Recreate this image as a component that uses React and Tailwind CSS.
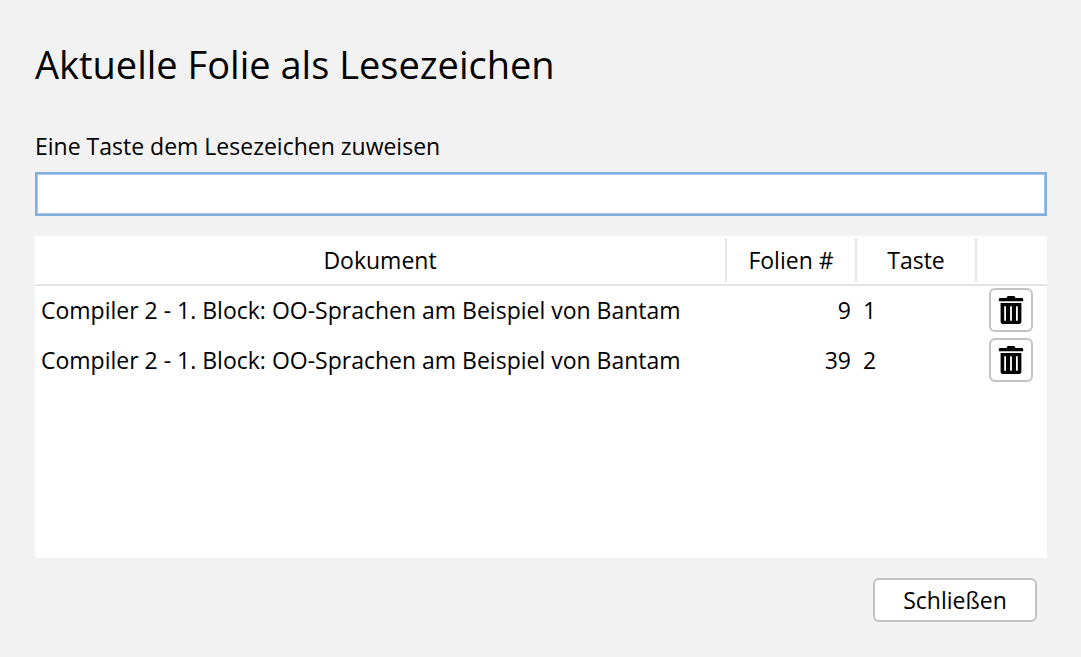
const bookmarks = [
  { title: 'Compiler 2 - 1. Block: OO-Sprachen am Beispiel von Bantam', slide: 9, shortcut: '1' },
  { title: 'Compiler 2 - 1. Block: OO-Sprachen am Beispiel von Bantam', slide: 39, shortcut: '2' },
];

function TrashIcon() {
  return (
    <svg width="26" height="30" viewBox="0 0 26 30" fill="#000" aria-hidden="true">
      <path d="M8.7 3V2.5Q8.7 1 10.2 1H15.8Q17.3 1 17.3 2.5V3H24Q25.2 3 25.2 4.2V6.2H.8V4.2Q.8 3 2 3Z" />
      <path
        fillRule="evenodd"
        d="M2.6 8H23.4V26.2Q23.4 29 20.6 29H5.4Q2.6 29 2.6 26.2ZM6.2 12V25Q6.2 26 7.1 26Q8 26 8 25V12Q8 11 7.1 11Q6.2 11 6.2 12ZM12.1 12V25Q12.1 26 13 26Q13.9 26 13.9 25V12Q13.9 11 13 11Q12.1 11 12.1 12ZM18 12V25Q18 26 18.9 26Q19.8 26 19.8 25V12Q19.8 11 18.9 11Q18 11 18 12Z"
      />
    </svg>
  );
}

function HeaderCell({ children, label, divider = true }) {
  return (
    <th scope="col" aria-label={label} className="border-b-2 border-[#e5e5e5] p-0 py-0.5 font-normal">
      <div
        className={
          divider
            ? 'flex h-11 items-center justify-center border-r-2 border-[#e5e5e5]'
            : 'flex h-11 items-center justify-center'
        }
      >
        {children}
      </div>
    </th>
  );
}

export default function App() {
  return (
    <main className="flex min-h-screen flex-col bg-[#f2f2f2] pt-[38px] pr-[34px] pb-[35px] pl-[35px] font-['Open_Sans','Noto_Sans',sans-serif] text-[23px] leading-8 text-black">
      <h1 className="text-[38px] leading-[52px]">Aktuelle Folie als Lesezeichen</h1>

      <label htmlFor="shortcut" className="mt-10">
        Eine Taste dem Lesezeichen zuweisen
      </label>
      <input
        id="shortcut"
        type="text"
        className="mt-2.5 h-11 w-full border-2 border-[#86aedb] bg-white px-2 inset-ring inset-ring-[#a3c8ef] outline-none"
      />

      <div className="mt-5 grow bg-white">
        <table className="w-full table-fixed border-separate border-spacing-0">
          <colgroup>
            <col />
            <col className="w-[130px]" />
            <col className="w-[120px]" />
            <col className="w-[70px]" />
          </colgroup>
          <thead>
            <tr>
              <HeaderCell>Dokument</HeaderCell>
              <HeaderCell>Folien #</HeaderCell>
              <HeaderCell>Taste</HeaderCell>
              <HeaderCell label="Löschen" divider={false} />
            </tr>
          </thead>
          <tbody>
            {bookmarks.map((b) => (
              <tr key={b.shortcut} className="h-[50px]">
                <td className="truncate px-1.5 pt-0 pb-0.5">{b.title}</td>
                <td className="px-1.5 pt-0 pb-0.5 text-right">{b.slide}</td>
                <td className="px-1.5 pt-0 pb-0.5">{b.shortcut}</td>
                <td className="p-0 pt-0.5 pb-1">
                  <button
                    type="button"
                    aria-label="Lesezeichen löschen"
                    className="ml-3 flex h-11 w-11 items-center justify-center rounded-md border-2 border-[#c2c2c2] bg-white"
                  >
                    <TrashIcon />
                  </button>
                </td>
              </tr>
            ))}
          </tbody>
        </table>
      </div>

      <div className="mt-5 flex justify-end pr-2.5">
        <button
          type="button"
          className="flex h-11 w-[164px] items-center justify-center rounded-md border-2 border-[#c2c2c2] bg-white"
        >
          Schließen
        </button>
      </div>
    </main>
  );
}
